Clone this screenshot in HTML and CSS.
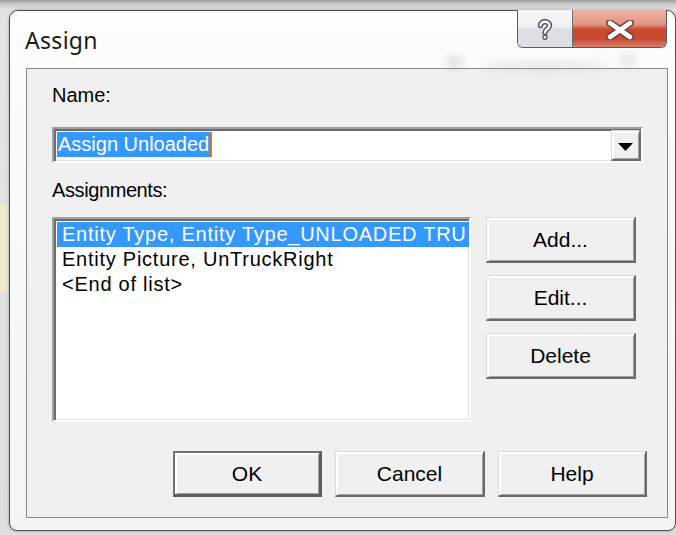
FILE: index.html
```html
<!DOCTYPE html>
<html>
<head>
<meta charset="utf-8">
<title>Assign</title>
<link rel="stylesheet" href="styles.css">
</head>
<body>
<div class="window">
  <div class="titlebar">
    <span class="title">Assign</span>
    <div class="glass glass-a"></div>
    <div class="glass glass-b"></div>
    <div class="glass glass-c"></div>
    <div class="caption-buttons">
      <div class="cap-btn cap-help">
        <svg width="16" height="22" viewBox="0 0 16 22">
          <path d="M3.5 6.5 C3.5 1.5 12.5 1.5 12.5 6.5 C12.5 10 8 10 8 13.5" fill="none" stroke="#55575e" stroke-width="5.4" stroke-linecap="round"/>
          <circle cx="8" cy="18.3" r="2.7" fill="#55575e"/>
          <path d="M3.5 6.5 C3.5 1.5 12.5 1.5 12.5 6.5 C12.5 10 8 10 8 13.5" fill="none" stroke="#fff" stroke-width="2.4" stroke-linecap="round"/>
          <circle cx="8" cy="18.3" r="1.3" fill="#fff"/>
        </svg>
      </div>
      <div class="cap-btn cap-close">
        <svg width="30" height="20" viewBox="0 0 30 20">
          <path d="M5 3 L25 17 M25 3 L5 17" stroke="#6b3a33" stroke-width="7.5" stroke-linecap="round"/>
          <path d="M5 3 L25 17 M25 3 L5 17" stroke="#fff" stroke-width="4.6" stroke-linecap="round"/>
        </svg>
      </div>
    </div>
  </div>

  <div class="client">
    <div class="label">Name:</div>
    <div class="combo">
      <div class="combo-value"><span class="selection">Assign Unloaded<span class="caret"></span></span></div>
      <div class="raised combo-btn">
        <svg width="15" height="8" viewBox="0 0 15 8"><path d="M0 0H15L7.5 8Z" fill="#000"/></svg>
      </div>
    </div>

    <div class="label label-assign">Assignments:</div>
    <div class="list-row">
      <div class="listbox">
        <div class="item selected">Entity Type, Entity Type_UNLOADED TRU</div>
        <div class="item">Entity Picture, UnTruckRight</div>
        <div class="item">&lt;End of list&gt;</div>
      </div>
      <div class="side-buttons">
        <button class="raised btn">Add...</button>
        <button class="raised btn">Edit...</button>
        <button class="raised btn">Delete</button>
      </div>
    </div>

    <div class="bottom-buttons">
      <button class="raised btn btn-default btn-ok">OK</button>
      <button class="raised btn btn-cancel">Cancel</button>
      <button class="raised btn btn-help">Help</button>
    </div>
  </div>
</div>
</body>
</html>
```

FILE: styles.css
```css
html, body {
  margin: 0;
}

body {
  width: 676px;
  height: 535px;
  overflow: hidden;
  box-sizing: border-box;
  padding: 10px 0 0 9px;
  font-family: "Liberation Sans", Arial, sans-serif;
  color: #000;
  background:
    linear-gradient(#eeeacb, #eeeacb) 0 205px / 8px 88px no-repeat,
    linear-gradient(to bottom, #9c9c9c 0, #c9c9c9 4px, #e4e4e4 10px, #dedede 100%);
}

/* dialog frame */
.window {
  width: 667px;
  height: 521px;
  box-sizing: border-box;
  border: 1px solid #4e4e4e;
  border-radius: 9px 9px 8px 8px;
  background: linear-gradient(to bottom, #fdfdfd, #f6f7f8 60%, #f3f4f5);
  display: flex;
  flex-direction: column;
  box-shadow: 0 0 3px rgba(0, 0, 0, 0.35);
}

.titlebar {
  height: 57px;
  flex: none;
  display: flex;
  justify-content: space-between;
  align-items: flex-start;
  position: relative;
}

.title {
  margin: 14px 0 0 15px;
  font-family: "Noto Sans", "Open Sans", sans-serif;
  font-size: 23px;
  line-height: 30px;
  color: #1b1b1b;
  letter-spacing: 0.3px;
}

/* blurred background showing through the glass */
.glass {
  position: absolute;
  border-radius: 50%;
  filter: blur(5px);
}
.glass-a {
  left: 436px;
  top: 45px;
  width: 18px;
  height: 12px;
  background: rgba(120, 120, 120, 0.22);
}
.glass-b {
  left: 470px;
  top: 50px;
  width: 130px;
  height: 9px;
  background: rgba(150, 150, 150, 0.2);
}
.glass-c {
  left: 610px;
  top: 43px;
  width: 16px;
  height: 12px;
  background: rgba(130, 130, 130, 0.22);
}

.caption-buttons {
  margin: -1px 8px 0 0;
  display: flex;
  border: 1px solid #5b5b5b;
  border-top: none;
  border-radius: 0 0 6px 6px;
  overflow: hidden;
  height: 38px;
  box-sizing: border-box;
  position: relative;
  box-shadow: 0 1px 0 rgba(255, 255, 255, 0.8);
}

.cap-btn {
  display: flex;
  align-items: center;
  justify-content: center;
}

.cap-help {
  width: 54px;
  border-right: 1px solid #6e6e6e;
  background: linear-gradient(to bottom, #f8f8f8 0, #eef0f2 45%, #dadee3 52%, #dde1e6 100%);
}
.cap-help svg {
  margin-top: 2px;
}

.cap-close {
  width: 93px;
  background: linear-gradient(to bottom, #ecb4a6 0, #e39683 38%, #cb4a30 52%, #c64a31 78%, #d9806a 100%);
}
.cap-close svg {
  margin-top: 2px;
}

/* client area */
.client {
  flex: none;
  height: 450px;
  box-sizing: border-box;
  margin: 0 7px 12px 16px;
  border: 1px solid #8a8a8a;
  background: #f0f0f0;
  padding: 15px 0 0 25px;
}

.label {
  font-size: 20px;
  line-height: 23px;
}

.label-assign {
  margin-top: 16px;
  letter-spacing: -0.4px;
}

/* sunken edit / list fields */
.combo,
.listbox {
  box-sizing: border-box;
  background: #fff;
  border: 2px solid;
  border-color: #a0a0a0 #fdfdfd #fdfdfd #a0a0a0;
  box-shadow: inset 2px 2px #6c6c6c, inset -1px -1px #e3e3e3;
}

.combo {
  margin-top: 20px;
  width: 591px;
  height: 36px;
  display: flex;
  justify-content: space-between;
  padding: 3px 0 0 3px;
}

.combo-value {
  font-size: 20px;
  line-height: 25px;
}

.selection {
  display: inline-block;
  height: 25px;
  background: #3399ff;
  color: #fff;
  padding-left: 1px;
}

.caret {
  display: inline-block;
  width: 2px;
  height: 25px;
  vertical-align: top;
  background: #d9702c;
  margin-left: 1px;
}

/* raised 3D controls */
.raised {
  box-sizing: border-box;
  background: #f0f0f0;
  border-style: solid;
  border-width: 1px 2px 2px 1px;
  border-color: #dadada #6a6a6a #6a6a6a #dadada;
  box-shadow: inset 2px 2px #fff, inset -1px -1px #a0a0a0;
}

.combo-btn {
  width: 30px;
  height: 31px;
  margin-top: -2px;
  display: flex;
  align-items: center;
  justify-content: center;
}
.combo-btn svg {
  margin-top: 3px;
}

.list-row {
  margin-top: 15px;
  display: flex;
  align-items: flex-start;
}

.listbox {
  width: 419px;
  height: 205px;
  padding: 3px 0 0 3px;
  overflow: hidden;
}

.item {
  height: 25px;
  line-height: 25px;
  font-size: 20px;
  letter-spacing: 0.75px;
  padding-left: 5px;
  white-space: nowrap;
}

.item.selected {
  background: #3399ff;
  color: #fff;
}

.side-buttons {
  margin-left: 15px;
  display: flex;
  flex-direction: column;
  gap: 12px;
}

.btn {
  width: 150px;
  height: 46px;
  padding: 0;
  font-family: "Liberation Sans", Arial, sans-serif;
  font-size: 21px;
  color: #000;
  text-align: center;
}

.bottom-buttons {
  margin: 29px 0 0 121px;
  display: flex;
  gap: 13px;
}

.btn-ok,
.btn-help {
  width: 149px;
}

.btn-default {
  border-width: 2px 3px 3px 2px;
  border-color: #737373 #5e5e5e #5e5e5e #737373;
}
```
